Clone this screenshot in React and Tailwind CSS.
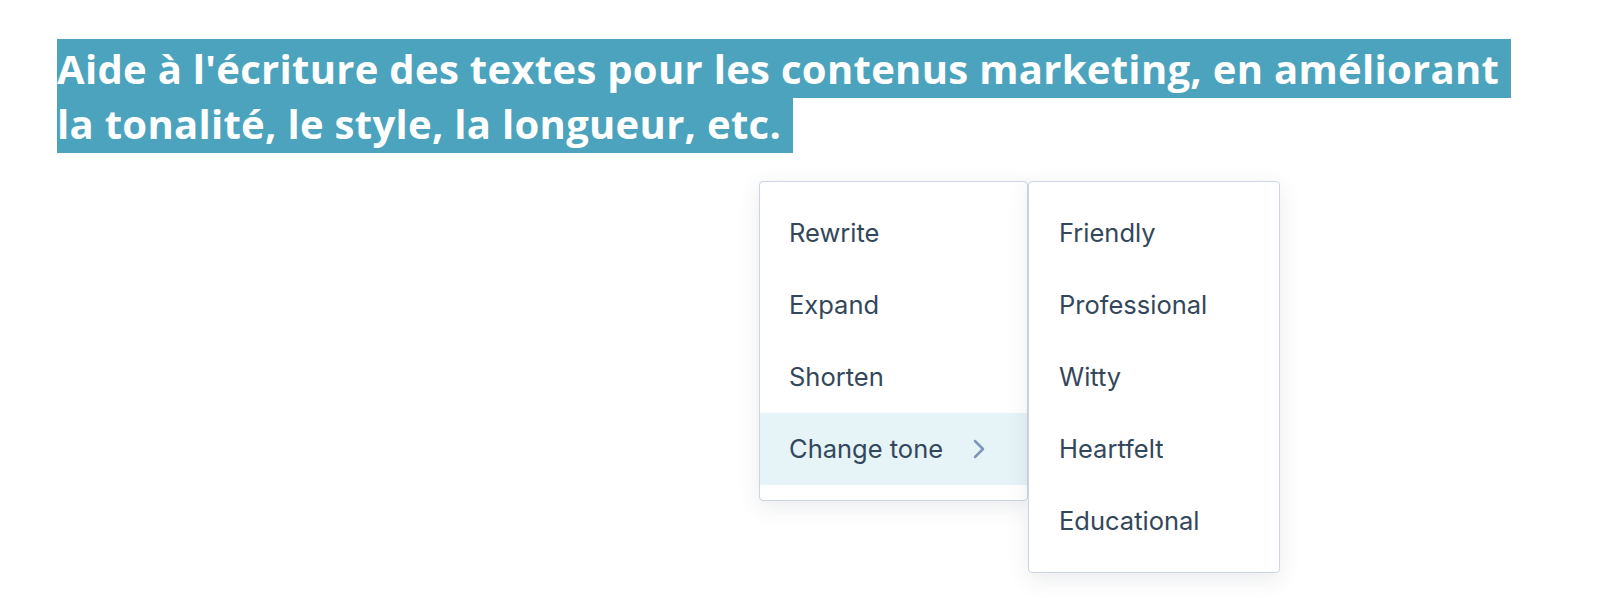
import { ChevronRight } from 'lucide-react';

const mainItems = ['Rewrite', 'Expand', 'Shorten'];
const tones = ['Friendly', 'Professional', 'Witty', 'Heartfelt', 'Educational'];

export default function App() {
  return (
    <div className="w-[1618px] h-[598px] bg-white overflow-hidden relative" style={{ fontFamily: '"Inter", "Noto Sans", sans-serif' }}>
      <div className="pt-[41px] pl-[57px] w-[1527px]">
        <h1
          className="text-[40px] leading-[55px] font-bold text-white tracking-[0.3px]"
          style={{ fontFamily: '"Open Sans", "Noto Sans", sans-serif' }}
        >
          <span className="bg-[#4ba3bd] box-decoration-clone py-[2px] pr-[12px]">
            Aide à l'écriture des textes pour les contenus marketing, en améliorant la tonalité, le style, la longueur, etc.
          </span>
        </h1>
      </div>

      <div className="absolute left-[759px] top-[181px] flex items-start">
        <div className="w-[269px] bg-white border border-[#cbd6e2] rounded-[4px] py-[15px] shadow-[0_6px_22px_rgba(45,62,80,0.10)]">
          {mainItems.map((item) => (
            <div key={item} className="h-[72px] flex items-center pl-[29px] text-[25.5px] text-[#33475b]">
              {item}
            </div>
          ))}
          <div className="h-[72px] flex items-center pl-[29px] text-[25.5px] text-[#33475b] bg-[#e6f3f7]">
            <span className="w-[174px]">Change tone</span>
            <ChevronRight className="w-[32px] h-[32px] text-[#7c98b6]" strokeWidth={1.9} />
          </div>
        </div>
        <div className="w-[252px] bg-white border border-[#cbd6e2] rounded-[4px] py-[15px] shadow-[0_6px_22px_rgba(45,62,80,0.10)]">
          {tones.map((tone) => (
            <div key={tone} className="h-[72px] flex items-center pl-[30px] text-[25.5px] text-[#33475b]">
              {tone}
            </div>
          ))}
        </div>
      </div>
    </div>
  );
}
